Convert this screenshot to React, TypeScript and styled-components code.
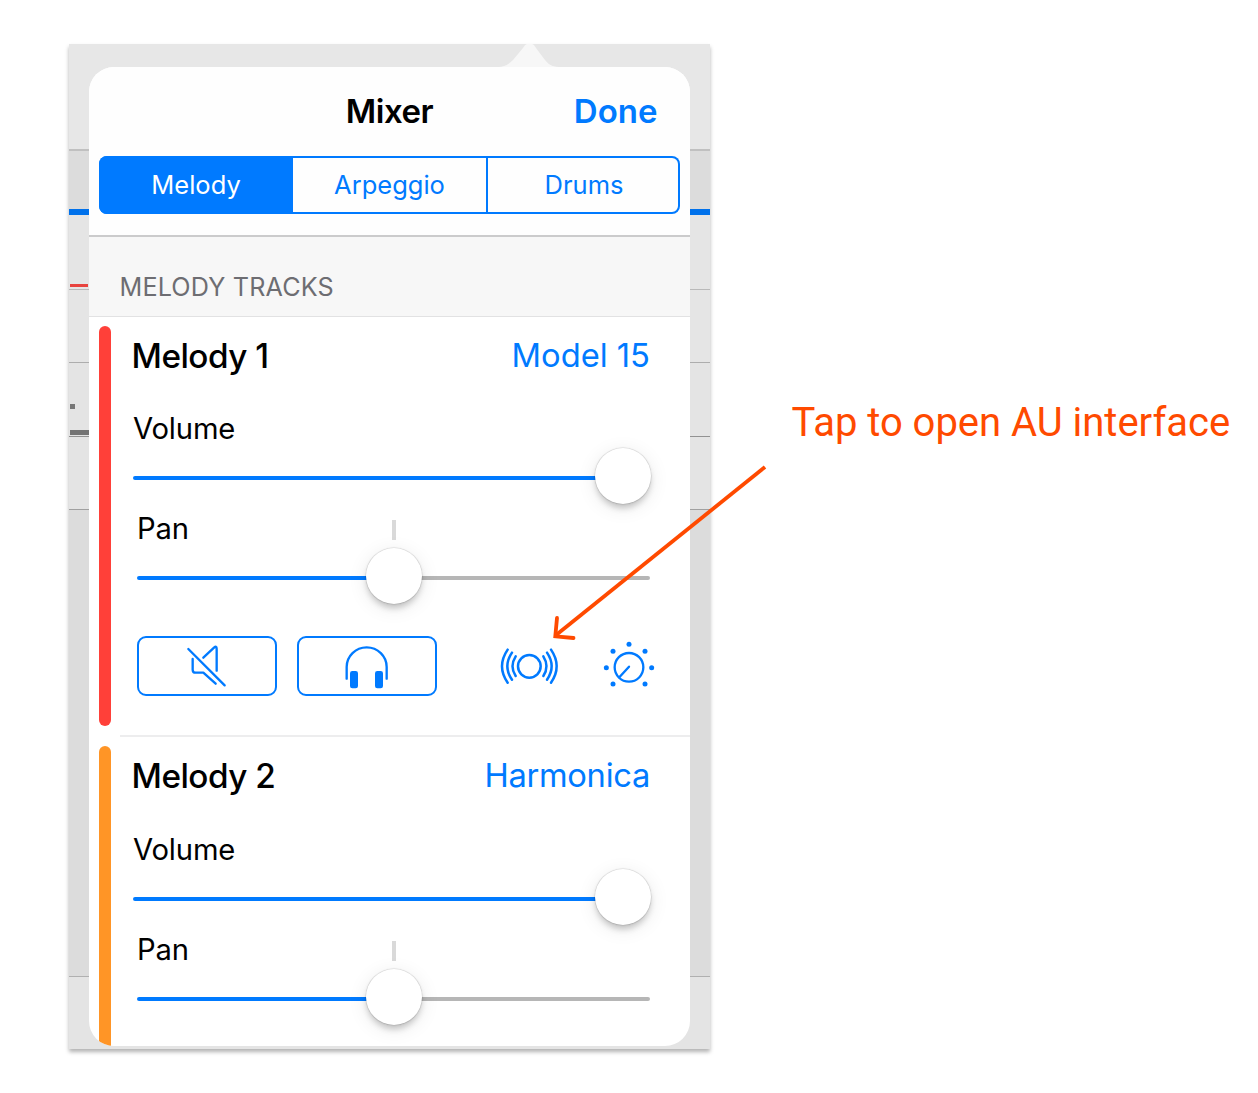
import React from "react";
import styled, { createGlobalStyle } from "styled-components";

const BLUE = "#007aff";
const ORANGE = "#ff4a00";

const GlobalStyle = createGlobalStyle`
  *, *::before, *::after { box-sizing: border-box; }
  body {
    margin: 0;
    background: #fff;
    color: #000;
    font-family: Inter, "Liberation Sans", sans-serif;
  }
  button { margin: 0; padding: 0; font: inherit; background: none; border: 0; }
`;

const Page = styled.main`
  position: relative;
  display: flex;
  align-items: flex-start;
  width: 1258px;
  height: 1093px;
  padding: 44px 0 0 69px;
  overflow: hidden;
`;

const Device = styled.div`
  flex: none;
  display: grid;
  width: 641px;
  height: 1005px;
  box-shadow: 0 3px 4px rgba(0, 0, 0, 0.3);
`;

const Backdrop = styled.div`
  grid-area: 1 / 1;
  display: flex;
  flex-direction: column;
`;

const Band = styled.div<{ $height: number; $tone: string; $line?: string; $lineWidth?: number }>`
  flex: none;
  display: flex;
  flex-direction: column;
  align-items: flex-start;
  height: ${(p) => p.$height}px;
  background: ${(p) => p.$tone};
  border-bottom: ${(p) => (p.$line ? `${p.$lineWidth ?? 1}px solid ${p.$line}` : "0")};
`;

const Mark = styled.i<{ $top: number; $width: number; $height: number; $color: string }>`
  margin: ${(p) => p.$top}px 0 0 1px;
  width: ${(p) => p.$width}px;
  height: ${(p) => p.$height}px;
  background: ${(p) => p.$color};
`;

const PopoverArea = styled.div`
  grid-area: 1 / 1;
  display: flex;
  flex-direction: column;
  padding: 0 20px;
`;

const PopoverTip = styled.svg`
  flex: none;
  display: block;
  width: 68px;
  height: 23px;
  margin-left: 405px;
`;

const Popover = styled.section`
  height: 979px;
  width: 601px;
  border-radius: 25px;
  background: #fff;
  overflow: hidden;
`;

const Header = styled.header`
  height: 170px;
  padding: 22.5px 10px 0;
  background: #fefefe;
  border-bottom: 2px solid #cbcbcc;
`;

const TitleBar = styled.div`
  display: grid;
  grid-template-columns: 1fr auto 1fr;
  align-items: center;
  height: 43px;
  padding-right: 22.5px;
  padding-left: 22.5px;
`;

const Title = styled.h1`
  grid-column: 2;
  margin: 0;
  font-size: 33px;
  font-weight: 600;
  letter-spacing: -0.45px;
`;

const Done = styled.button`
  justify-self: end;
  color: ${BLUE};
  font-size: 33px;
  font-weight: 600;
  letter-spacing: 0;
`;

const Segments = styled.div`
  display: grid;
  grid-template-columns: 194px 195px 1fr;
  height: 58px;
  margin-top: 23px;
  border-radius: 8px;
  box-shadow: inset 0 0 0 2px ${BLUE};
  overflow: hidden;
`;

const Segment = styled.button<{ $active?: boolean; $divided?: boolean }>`
  color: ${(p) => (p.$active ? "#fff" : BLUE)};
  background: ${(p) => (p.$active ? BLUE : "transparent")};
  border-right: ${(p) => (p.$divided ? `2px solid ${BLUE}` : "0")};
  font-size: 25.5px;
  letter-spacing: 0;
`;

const SectionTitle = styled.h2`
  height: 80px;
  margin: 0;
  padding: 19px 31px 0 30.5px;
  background: #f7f7f7;
  border-bottom: 1px solid #e2e2e3;
  color: #6d6d72;
  font-size: 25.2px;
  font-weight: 400;
  line-height: 62px;
  letter-spacing: 0.15px;
`;

const Track = styled.article`
  display: flex;
  height: 420.67px;
  padding: 8.5px 0 0 10px;
`;

const ColorBar = styled.div<{ $color: string }>`
  flex: none;
  width: 12px;
  height: 400px;
  border-radius: 6px;
  background: ${(p) => p.$color};
`;

const TrackBody = styled.div`
  flex: 1;
  min-width: 0;
  display: flex;
  flex-direction: column;
  height: 411px;
  margin-left: 9px;
  padding: 10px 40px 0 11px;
  border-bottom: 2px solid #ededee;
`;

const TrackHead = styled.div`
  display: flex;
  justify-content: space-between;
  height: 40px;
  margin-bottom: 29.5px;
  line-height: 40px;
`;

const TrackName = styled.h3`
  margin: 0 0 0 0.5px;
  font-size: 33.3px;
  font-weight: 500;
  letter-spacing: -0.5px;
`;

const Instrument = styled.button<{ $spacing: number }>`
  height: 40px;
  margin-top: -1px;
  color: ${BLUE};
  font-size: 32.7px;
  line-height: 40px;
  letter-spacing: ${(p) => p.$spacing}px;
`;

const Control = styled.div<{ $inset: number }>`
  display: flex;
  flex-direction: column;
  height: 100px;
  padding-left: ${(p) => p.$inset}px;
`;

const ControlLabel = styled.div`
  display: flex;
  justify-content: space-between;
  height: 40px;
  margin-top: 2px;
  padding-left: 0.5px;
  font-size: 29.2px;
  line-height: 44.5px;
  letter-spacing: -0.15px;
`;

const Tick = styled.i`
  flex: none;
  width: 4px;
  height: 20px;
  margin: 13px 254.5px 0 0;
  background: #d9d9d9;
`;

const Slider = styled.div`
  display: grid;
  grid-template-columns: minmax(0, 1fr);
  align-items: center;
  height: 58px;
  width: 100%;
`;

const Rail = styled.div<{ $value: number }>`
  grid-area: 1 / 1;
  height: 4px;
  margin-top: 4px;
  border-radius: 2px;
  background: linear-gradient(to right, ${BLUE} ${(p) => p.$value}%, #b6b6b6 ${(p) => p.$value}%);
`;

const Thumb = styled.div<{ $offset: number }>`
  grid-area: 1 / 1;
  width: 56px;
  height: 56px;
  margin-left: ${(p) => p.$offset}px;
  border-radius: 50%;
  background: #fff;
  box-shadow: 0 0 1px 0.5px rgba(0, 0, 0, 0.16), 0 5px 6px -1px rgba(0, 0, 0, 0.2),
    0 4px 20px rgba(0, 0, 0, 0.09);
`;

const Actions = styled.div`
  display: flex;
  align-items: flex-start;
  height: 60px;
  margin: 31px -8px 0 6px;
`;

const OutlineButton = styled.button`
  flex: none;
  display: flex;
  align-items: center;
  justify-content: center;
  width: 140px;
  height: 60px;
  margin-right: 20.4px;
  border: 2px solid ${BLUE};
  border-radius: 9px;
`;

const IconButton = styled.button<{ $gap: number }>`
  flex: none;
  height: 60px;
  margin-left: ${(p) => p.$gap}px;
`;

const Icon = styled.svg`
  flex: none;
  display: block;
  fill: none;
  stroke: ${BLUE};
  stroke-linecap: round;
  stroke-linejoin: round;
  overflow: visible;
`;

const Callout = styled.p`
  flex: none;
  margin: 354px 0 0 81.5px;
  color: ${ORANGE};
  font-family: Roboto, "Liberation Sans", sans-serif;
  font-size: 40px;
  line-height: 50px;
  letter-spacing: -0.02px;
  white-space: nowrap;
`;

const Arrow = styled.svg`
  position: absolute;
  left: 545px;
  top: 455px;
  pointer-events: none;
`;

/* Icon drawings use a three-units-per-pixel grid. */
const MuteIcon = () => (
  <Icon width="140" height="60" viewBox="50 408 420 180" strokeWidth="7">
    <path d="M204 447L313 556M249 473L281 443Q289 436 289 446V512M217 477V509Q217 518 226 518H249L286 551" />
  </Icon>
);

const HeadphonesIcon = () => (
  <Icon width="140" height="60" viewBox="531 408 420 180" strokeWidth="7">
    <path d="M680 536V501A60 59 0 0 1 800 501V536" />
    <rect x="690" y="513" width="24" height="52" rx="7" fill={BLUE} stroke="none" />
    <rect x="765" y="513" width="24" height="52" rx="7" fill={BLUE} stroke="none" />
  </Icon>
);

const PluginIcon = () => (
  <Icon width="60" height="60" viewBox="58 108 180 180" strokeWidth="7.5">
    <circle cx="149" cy="199" r="34" />
    <path d="M84 149Q50 199 84 248M97 158Q69 199 97 239M108 169Q89 199 108 228" />
    <path d="M214 149Q248 199 214 248M202 158Q230 199 202 239M191 169Q210 199 191 228" />
  </Icon>
);

const KNOB_DOTS = [[447, 133], [399, 154], [495, 154], [379, 203], [515, 203], [399, 252], [495, 252]];

const KnobIcon = () => (
  <Icon width="60" height="60" viewBox="357 108 180 180" strokeWidth="7">
    <circle cx="447" cy="202" r="43" />
    <path d="M447 200L418 232" />
    {KNOB_DOTS.map(([x, y]) => (
      <circle key={`${x}-${y}`} cx={x} cy={y} r="7.5" fill={BLUE} stroke="none" />
    ))}
  </Icon>
);

const TrackRow = ({ name, instrument, color, spacing }: { name: string; instrument: string; color: string; spacing: number }) => (
  <Track>
    <ColorBar $color={color} />
    <TrackBody>
      <TrackHead>
        <TrackName>{name}</TrackName>
        <Instrument $spacing={spacing}>{instrument}</Instrument>
      </TrackHead>
      <Control $inset={1.5}>
        <ControlLabel>Volume</ControlLabel>
        <Slider>
          <Rail $value={100} />
          <Thumb $offset={462.5} />
        </Slider>
      </Control>
      <Control $inset={5.5}>
        <ControlLabel>
          Pan
          <Tick />
        </ControlLabel>
        <Slider>
          <Rail $value={50} />
          <Thumb $offset={229.8} />
        </Slider>
      </Control>
      <Actions>
        <OutlineButton aria-label="Mute"><MuteIcon /></OutlineButton>
        <OutlineButton aria-label="Solo"><HeadphonesIcon /></OutlineButton>
        <IconButton $gap={41.7} aria-label="Plugin"><PluginIcon /></IconButton>
        <IconButton $gap={39.5} aria-label="Effects"><KnobIcon /></IconButton>
      </Actions>
    </TrackBody>
  </Track>
);

export default function App() {
  return (
    <>
      <GlobalStyle />
      <Page>
        <Device>
          <Backdrop>
            <Band $height={107} $tone="#e7e7e7" $line="#c0c0c0" $lineWidth={2} />
            <Band $height={64} $tone="#dcdcdc" $line="#0071eb" $lineWidth={6} />
            <Band $height={75} $tone="#e5e5e5" $line="#b9b9b9">
              <Mark $top={69} $width={18} $height={3} $color="#e8433e" />
            </Band>
            <Band $height={73} $tone="#e5e5e5" $line="#adadad" />
            <Band $height={74} $tone="#e4e4e4" $line="#929292">
              <Mark $top={41} $width={5} $height={5} $color="#777" />
              <Mark $top={21} $width={19} $height={5} $color="#747474" />
            </Band>
            <Band $height={73} $tone="#e4e4e4" $line="#a0a0a0" />
            <Band $height={467} $tone="#dcdcdc" $line="#b0b0b0" />
            <Band $height={72} $tone="#e4e4e4" />
          </Backdrop>
          <PopoverArea>
            <PopoverTip viewBox="0 0 68 23">
              <path d="M0 23C9 23 13 22 19 16L29 4Q31.500 0 33 0H38Q39.500 0 42 4L51 16C56 22 59 23 68 23Z" fill="#f7f7f7" />
            </PopoverTip>
            <Popover>
              <Header>
                <TitleBar>
                  <Title>Mixer</Title>
                  <Done>Done</Done>
                </TitleBar>
                <Segments>
                  <Segment $active>Melody</Segment>
                  <Segment $divided>Arpeggio</Segment>
                  <Segment>Drums</Segment>
                </Segments>
              </Header>
              <SectionTitle>MELODY TRACKS</SectionTitle>
              <TrackRow name="Melody 1" instrument="Model 15" color="#ff4039" spacing={0} />
              <TrackRow name="Melody 2" instrument="Harmonica" color="#ff9526" spacing={-0.3} />
            </Popover>
          </PopoverArea>
        </Device>
        <Callout>Tap to open AU interface</Callout>
        <Arrow width="230" height="195" viewBox="545 455 230 195" fill="none" stroke={ORANGE} strokeWidth="3.8">
          <path d="M765 467L555.5 635.5" />
          <path d="M557 618L555.3 636.3L573.5 638" strokeLinecap="round" />
        </Arrow>
      </Page>
    </>
  );
}
